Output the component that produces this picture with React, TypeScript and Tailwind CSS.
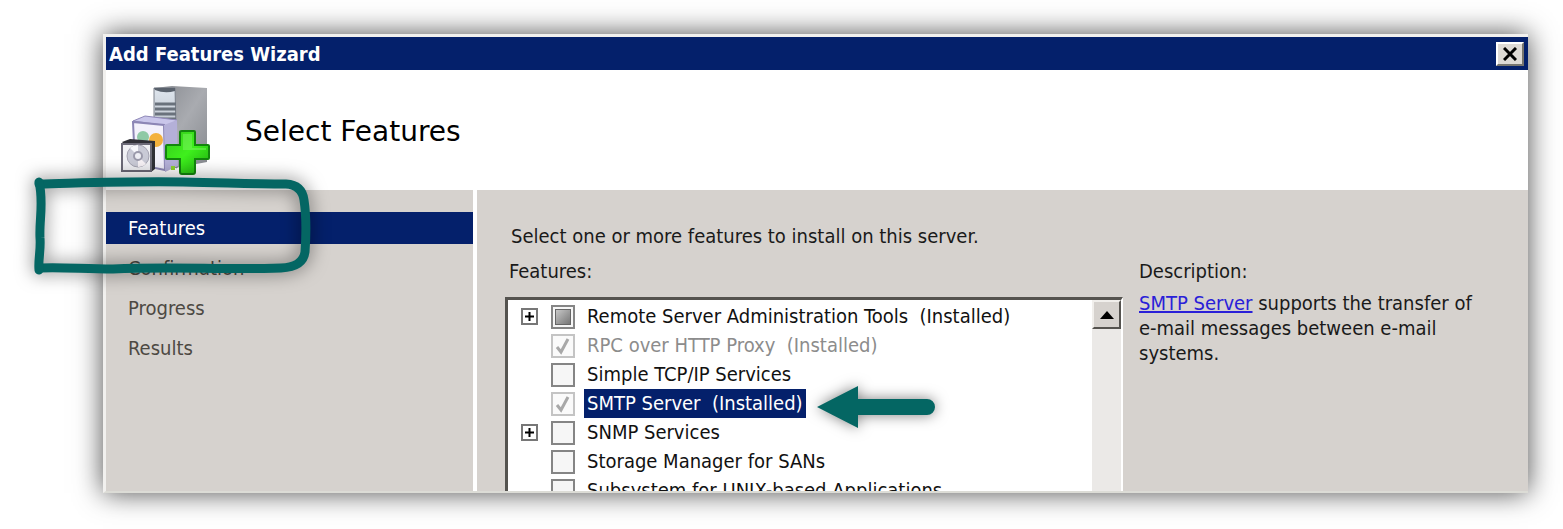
import { useState } from "react";

interface Feature {
  id: string;
  name: string;
  state: "on" | "off" | "partial";
  expandable?: boolean;
  disabled?: boolean;
}

const STEPS = ["Features", "Confirmation", "Progress", "Results"];

const FEATURES: Feature[] = [
  { id: "rsat", name: "Remote Server Administration Tools\u00a0 (Installed)", state: "partial", expandable: true },
  { id: "rpc", name: "RPC over HTTP Proxy\u00a0 (Installed)", state: "on", disabled: true },
  { id: "tcpip", name: "Simple TCP/IP Services", state: "off" },
  { id: "smtp", name: "SMTP Server\u00a0 (Installed)", state: "on", disabled: true },
  { id: "snmp", name: "SNMP Services", state: "off", expandable: true },
  { id: "san", name: "Storage Manager for SANs", state: "off" },
  { id: "unix", name: "Subsystem for UNIX-based Applications", state: "off" },
];

function ServerIcon() {
  return (
    <svg viewBox="0 0 90 92" className="h-[92px] w-[90px] shrink-0" aria-hidden="true">
      <defs>
        <linearGradient id="side" x1="0" y1="0" x2="1" y2="1">
          <stop offset="0" stopColor="#85888e" />
          <stop offset="0.5" stopColor="#a9abb0" />
          <stop offset="1" stopColor="#85888d" />
        </linearGradient>
        <linearGradient id="front" x1="0" y1="0" x2="0" y2="1">
          <stop offset="0" stopColor="#dfe6ee" />
          <stop offset="1" stopColor="#9aa1aa" />
        </linearGradient>
        <linearGradient id="plus" x1="0" y1="0" x2="1" y2="1">
          <stop offset="0" stopColor="#35c51c" />
          <stop offset="0.5" stopColor="#3ff01d" />
          <stop offset="1" stopColor="#1ca90d" />
        </linearGradient>
      </defs>
      {/* tower */}
      <path d="M33 4 L51 2 L86 4 L86 78 L54 84 L33 70 Z" fill="url(#side)" />
      <path d="M33 4 L54 4 L56 84 L33 74 Z" fill="url(#front)" stroke="#7b808a" strokeWidth="1" />
      <path d="M33 4 H54 V7 Q44 10 34 6 Z" fill="#5a626d" />
      <path d="M34 20 H55 M34 25 H55 M34 30 H55 M34 35 H55" stroke="#6a727c" strokeWidth="3" />
      {/* software box */}
      <path d="M12 37 L24 32 L56 36 L49 42 Z" fill="#c9c6ea" stroke="#8f88b8" strokeWidth="1" />
      <path d="M12 38 L43 41 L44 86 L14 80 Z" fill="#f3f1fb" stroke="#8c86b5" strokeWidth="2" />
      <path d="M43 41 L56 36 L57 82 L44 88 Z" fill="#b4b0d8" />
      <circle cx="22" cy="53" r="6" fill="#8fc9a6" />
      <circle cx="35" cy="56" r="7" fill="#f3b13d" />
      {/* disc case */}
      <path d="M1 58 L9 55 L34 57 L34 85 L30 88 Z" fill="#2f2f36" />
      <rect x="1" y="60" width="29" height="27" fill="#f1f1f5" stroke="#6c6a78" strokeWidth="2" />
      <circle cx="17" cy="72" r="11" fill="#c9cad6" stroke="#a5a4b2" strokeWidth="1" />
      <path d="M17 72 L9 64 A11 11 0 0 1 17 61 Z" fill="#f7f7fb" />
      <path d="M17 72 L25 80 A11 11 0 0 1 17 83 Z" fill="#f7f2f6" />
      <circle cx="17" cy="72" r="4" fill="#eeeef4" stroke="#9b9aab" strokeWidth="2" />
      <path d="M50 84 h4" stroke="#8ed32e" strokeWidth="4" />
      {/* plus */}
      <path
        d="M61 47 H73 Q74 47 74 48 V61 H87 Q88 61 88 62 V74 Q88 75 87 75 H74 V88 Q74 90 72 90 H61 Q59 90 59 88 V75 H46 Q45 75 45 74 V62 Q45 61 46 61 H59 V48 Q59 47 61 47 Z"
        fill="url(#plus)"
        stroke="#13860d"
        strokeWidth="2"
      />
      <path d="M62 50 H71 V64 H85 V66 H62 Z" fill="#8df773" opacity="0.4" />
    </svg>
  );
}

// Hand-drawn marker around the current step
function StepMarker() {
  return (
    <svg
      viewBox="0 0 300 120"
      className="pointer-events-none absolute top-[134px] -left-[80px] h-[120px] w-[300px] overflow-visible drop-shadow-[0_0_9px_rgba(0,0,0,0.55)]"
      fill="none"
      stroke="#046663"
      strokeLinecap="round"
      strokeLinejoin="round"
      aria-hidden="true"
    >
      <path strokeWidth="9" d="M16 16 C60 15 110 13 160 14 S230 16 263 16 Q279 17 281 32 C284 52 283 70 282 84 Q280 99 258 100 C200 102 150 98 90 101 C60 101 40 99 17 100" />
      <path strokeWidth="9" d="M16 14 C21 34 16 52 17 70 C18 82 15 92 16 102" />
    </svg>
  );
}

function Arrow() {
  return (
    <svg
      viewBox="0 0 120 44"
      className="pointer-events-none absolute -top-1 left-full ml-[10px] h-11 w-[120px] overflow-visible drop-shadow-[0_0_7px_rgba(0,0,0,0.5)]"
      aria-hidden="true"
    >
      <path d="M1 22 L42 1 V14 H111 A8 8 0 0 1 111 30 H42 V43 Z" fill="#046663" />
    </svg>
  );
}

function FeatureRow({ feature, selected, onSelect }: { feature: Feature; selected: boolean; onSelect: () => void }) {
  const [checked, setChecked] = useState(feature.state === "on");

  return (
    <li className="flex h-[29px] items-center" onClick={onSelect}>
      <div className="flex w-[43px] shrink-0 pl-[13px]">
        {feature.expandable && (
          <button
            type="button"
            aria-label={`Expand ${feature.name}`}
            className="flex size-[17px] items-center justify-center border-2 border-[#777] bg-white"
          >
            <svg viewBox="0 0 9 9" className="size-[9px]" aria-hidden="true">
              <path d="M0 4.5 H9 M4.5 0 V9" stroke="#000" strokeWidth="2" />
            </svg>
          </button>
        )}
      </div>
      <div className="grid size-6 shrink-0 place-items-center">
        <input
          type="checkbox"
          id={feature.id}
          checked={checked}
          disabled={feature.disabled}
          onChange={(e) => setChecked(e.target.checked)}
          className={`col-start-1 row-start-1 size-6 appearance-none border-2 ${
            feature.disabled ? "border-[#c4c4c4] bg-[#fafafa]" : "border-[#858585] bg-[#f6f6f6]"
          }`}
        />
        {feature.state === "partial" && !checked && (
          <span className="pointer-events-none col-start-1 row-start-1 size-4 border border-[#666] bg-linear-to-br from-[#c8c8c8] to-[#777]" />
        )}
        {checked && (
          <svg viewBox="0 0 20 20" className="pointer-events-none col-start-1 row-start-1 size-5" aria-hidden="true">
            <path d="M4 11 L8 16 L15 3" fill="none" stroke="#a8a8a8" strokeWidth="3" />
          </svg>
        )}
      </div>
      <div className="relative ml-[9px]">
        <label
          htmlFor={feature.id}
          className={`block h-[29px] px-[3px] leading-[29px] whitespace-nowrap ${
            selected ? "bg-[#04206b] text-white" : feature.disabled ? "text-[#8c8c8c]" : "text-[#111]"
          }`}
        >
          {feature.name}
        </label>
        {feature.id === "smtp" && <Arrow />}
      </div>
    </li>
  );
}

export default function App() {
  const [step, setStep] = useState("Features");
  const [selected, setSelected] = useState("smtp");

  return (
    <div className="flex h-screen bg-white pt-[34px] pr-[35px] pb-9 pl-[103px] font-['DejaVu_Sans_Condensed','DejaVu_Sans',sans-serif] text-[20px] text-[#1a1a1a]">
      <div className="relative flex min-w-0 flex-1 flex-col shadow-[0_0_26px_rgba(0,0,0,0.7)]">
        <div className="flex min-h-0 flex-1 flex-col overflow-hidden border-[3px] border-r-0 border-b-2 border-[#f1f0ee] border-b-[#dcdcd6] bg-[#d6d2ce]">
          {/* Title bar */}
          <header className="flex h-[33px] shrink-0 items-center justify-between bg-[#04206b] pr-1 pl-[3px]">
            <h1 className="leading-6 font-bold text-white">Add Features Wizard</h1>
            <button
              type="button"
              aria-label="Close"
              className="flex h-6 w-7 items-center justify-center border-2 border-t-white border-r-[#77756f] border-b-[#77756f] border-l-white bg-[#dedad5]"
            >
              <svg viewBox="0 0 14 14" className="size-[14px]" aria-hidden="true">
                <path d="M1 1 L13 13 M13 1 L1 13" stroke="#000" strokeWidth="3" />
              </svg>
            </button>
          </header>

          {/* Page heading */}
          <div className="flex h-[120px] shrink-0 items-center gap-[34px] bg-white pl-[15px]">
            <ServerIcon />
            <h2 className="pt-1 font-['DejaVu_Sans',sans-serif] text-[28px] text-black">Select Features</h2>
          </div>

          <div className="flex min-h-0 flex-1">
            <nav className="flex w-[371px] shrink-0 flex-col gap-2 border-r-4 border-white pt-[22px]">
              {STEPS.map((name) => (
                <button
                  key={name}
                  type="button"
                  onClick={() => setStep(name)}
                  className={`h-8 shrink-0 pl-[22px] text-left ${step === name ? "bg-[#04206b] text-white" : "text-[#4d4943]"}`}
                >
                  {name}
                </button>
              ))}
            </nav>

            <main className="flex min-w-0 flex-1 flex-col pt-[34px] pl-7">
              <p className="shrink-0 pl-[6px] leading-6">Select one or more features to install on this server.</p>
              <div className="mt-[11px] flex min-h-0 flex-1 gap-4">
                <section className="flex min-w-0 flex-1 flex-col">
                  <h3 className="shrink-0 pl-1 leading-6">Features:</h3>
                  <div className="mt-[14px] flex min-h-0 flex-1 border-t-3 border-r-2 border-l-3 border-t-[#55534f] border-r-white border-l-[#55534f] bg-white">
                    <ul className="min-w-0 flex-1 overflow-hidden pt-[2px]">
                      {FEATURES.map((feature) => (
                        <FeatureRow
                          key={feature.id}
                          feature={feature}
                          selected={selected === feature.id}
                          onSelect={() => setSelected(feature.id)}
                        />
                      ))}
                    </ul>
                    <div className="w-[29px] shrink-0 bg-[#ebe9e7]">
                      <button
                        type="button"
                        aria-label="Scroll up"
                        className="flex h-[29px] w-full items-center justify-center border-2 border-t-[#f1efec] border-r-[#55534f] border-b-[#55534f] border-l-[#f1efec] bg-[#d6d2ce]"
                      >
                        <svg viewBox="0 0 14 8" className="h-2 w-[14px]" aria-hidden="true">
                          <path d="M7 0 L14 8 H0 Z" fill="#000" />
                        </svg>
                      </button>
                    </div>
                  </div>
                </section>
                <section className="w-[389px] shrink-0 pr-[46px]">
                  <h3 className="leading-6">Description:</h3>
                  <p className="mt-2 leading-[25px]">
                    <a href="#smtp" className="text-[#2a20d8] underline">SMTP Server</a> supports the transfer of{" "}
                    <span className="whitespace-nowrap">e-mail</span> messages between{" "}
                    <span className="whitespace-nowrap">e-mail</span> systems.
                  </p>
                </section>
              </div>
            </main>
          </div>
        </div>
        <StepMarker />
      </div>
    </div>
  );
}
